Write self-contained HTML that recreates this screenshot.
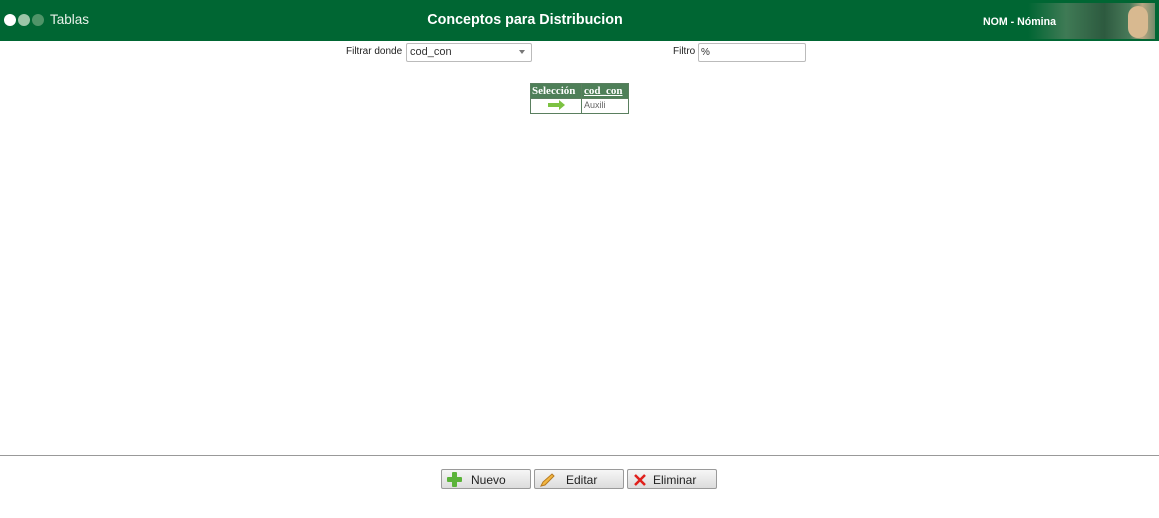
<!DOCTYPE html>
<html><head><meta charset="utf-8"><style>
*{margin:0;padding:0;box-sizing:border-box}
body{width:1159px;height:518px;background:#fff;font-family:"Liberation Sans",sans-serif;position:relative;overflow:hidden}
.hdr{position:absolute;left:0;top:0;width:1159px;height:41px;background:#006633}
.dot{position:absolute;top:14px;width:12px;height:12px;border-radius:50%}
.abs{position:absolute}
.btn{position:absolute;top:469px;height:20px;border:1px solid #9a9a9a;border-radius:2px;background:linear-gradient(#f6f6f6,#dcdcdc);font-size:12px;color:#222}
.btn span{position:absolute;top:3px}
</style></head><body>
<div class="hdr">
<div class="dot" style="left:4px;background:#fff"></div>
<div class="dot" style="left:18px;background:#9cc5a8"></div>
<div class="dot" style="left:32px;background:#4f9468"></div>
<div class="abs" style="left:50px;top:12px;color:#e8f2ea;font-size:13.5px">Tablas</div>
<div class="abs" style="left:0;width:1050px;top:12px;text-align:center;color:#fff;font-size:14.3px;font-weight:bold">Conceptos para Distribucion</div>
<div class="abs" style="left:1028px;top:3px;width:127px;height:36px;background:linear-gradient(90deg,#006633,#3f7a55 30%,#2d5a3f 60%,#4a7a5a 80%,#b9a683 90%,#6f8a6a)"></div>
<div class="abs" style="left:1128px;top:6px;width:20px;height:32px;border-radius:10px;background:#d8b990"></div>
<div class="abs" style="left:983px;top:16px;color:#fff;font-size:10.6px;font-weight:bold">NOM - Nómina</div>
</div>
<div class="abs" style="left:346px;top:46px;font-size:10px;color:#222">Filtrar donde</div>
<div class="abs" style="left:406px;top:43px;width:126px;height:19px;border:1px solid #bbb;border-radius:2px;font-size:11px;padding:2px 3px;color:#333">cod_con</div>
<div class="abs" style="left:519px;top:50px;width:0;height:0;border-left:3px solid transparent;border-right:3px solid transparent;border-top:4px solid #777"></div>
<div class="abs" style="left:673px;top:46px;font-size:10px;color:#222">Filtro</div>
<div class="abs" style="left:698px;top:43px;width:108px;height:19px;border:1px solid #bbb;border-radius:2px;font-size:10px;padding:3px 2px;color:#333">%</div>
<div class="abs" style="left:530px;top:83px;width:99px;height:31px;border:1px solid #5a7f5f">
<div class="abs" style="left:0;top:0;width:97px;height:14px;background:#4e7f58"></div>
<div class="abs" style="left:1px;top:1px;color:#fff;font:bold 11px 'Liberation Serif',serif">Selección</div>
<div class="abs" style="left:53px;top:1px;color:#fff;font:bold 11px 'Liberation Serif',serif;text-decoration:underline">cod_con</div>
<div class="abs" style="left:50px;top:0;width:1px;height:29px;background:#5a7f5f"></div>
<div class="abs" style="left:0;top:14px;width:97px;height:1px;background:#5a7f5f"></div>
<div class="abs" style="left:17px;top:19px;width:12px;height:4px;background:#7cc242"></div>
<div class="abs" style="left:28px;top:16px;border-top:5px solid transparent;border-bottom:5px solid transparent;border-left:6px solid #7cc242"></div>
<div class="abs" style="left:53px;top:16px;font-size:9px;color:#666">Auxili</div>
</div>
<div class="abs" style="left:0;top:455px;width:1159px;height:1px;background:#999"></div>
<div class="btn" style="left:441px;width:90px">
<div class="abs" style="left:10px;top:2px;width:5px;height:15px;background:#5bb33a;border-radius:1px"></div>
<div class="abs" style="left:5px;top:7px;width:15px;height:5px;background:#5bb33a;border-radius:1px"></div>
<span style="left:29px">Nuevo</span></div>
<div class="btn" style="left:534px;width:90px">
<svg class="abs" style="left:4px;top:2px" width="16" height="16"><path d="M2 14 L4 10 L13 2 L15 4 L6 13 Z" fill="#f2b640" stroke="#b77a20" stroke-width="1"/></svg>
<span style="left:31px">Editar</span></div>
<div class="btn" style="left:627px;width:90px">
<svg class="abs" style="left:5px;top:3px" width="14" height="14"><path d="M2 2L12 12M12 2L2 12" stroke="#e0201c" stroke-width="2.5"/></svg>
<span style="left:25px">Eliminar</span></div>
</body></html>
